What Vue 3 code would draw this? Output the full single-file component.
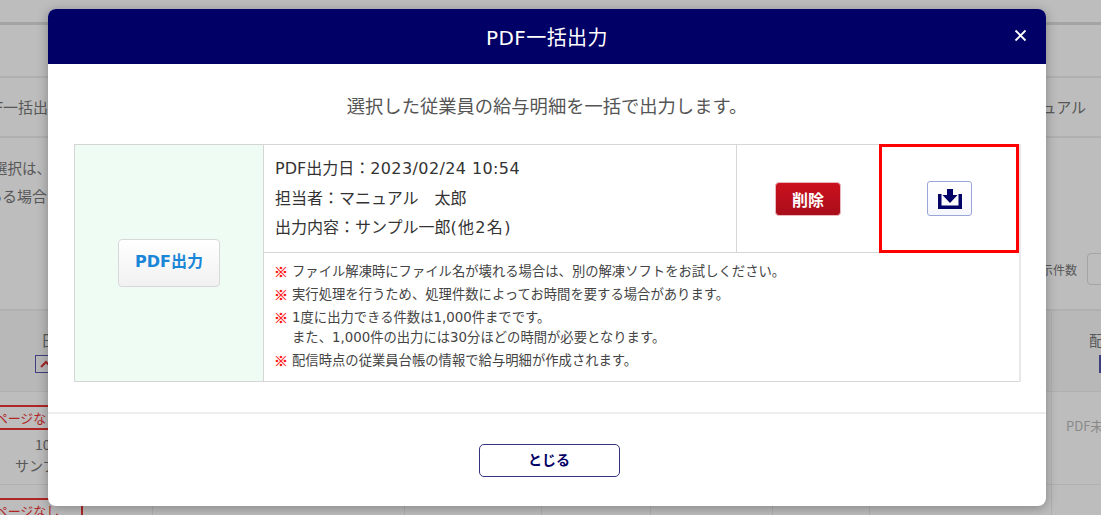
<script setup>
const notes = [
  ['ファイル解凍時にファイル名が壊れる場合は、別の解凍ソフトをお試しください。'],
  ['実行処理を行うため、処理件数によってお時間を要する場合があります。'],
  ['1度に出力できる件数は1,000件までです。', 'また、1,000件の出力には30分ほどの時間が必要となります。'],
  ['配信時点の従業員台帳の情報で給与明細が作成されます。']
]
const lastCells = [71, 252, 137, 109, 122, 97, 182]
</script>

<template>
  <div class="page">
    <div class="bg">
      <div class="bg-top"></div>
      <div class="bg-nav"></div>
      <div class="bg-tools"><span class="cut-a">PDF一括出力</span><span class="right-a">マニュアル</span></div>
      <div class="bg-info">
        <div class="info-text">
          <p class="l1">選択は、</p>
          <p class="l2">ある場合</p>
        </div>
        <div class="count"><span>表示件数</span><i class="select"></i></div>
      </div>
      <div class="bg-head">
        <div class="head-l"><span>日付</span><i class="sort"><svg width="12" height="8" viewBox="0 0 12 8"><path d="M1 7l5-5 5 5" fill="none" stroke="#d33" stroke-width="2"/></svg></i></div>
        <div class="head-r"><span>配信</span><i class="sort2"></i></div>
      </div>
      <div class="bg-row">
        <div class="row-l"><b class="tag">ページなし</b><span class="n">10</span><span class="s">サンプル一郎</span></div>
        <div class="row-r">PDF未出力</div>
      </div>
      <div class="bg-row last">
        <div class="row-l"><b class="tag">ページなし</b></div>
        <i v-for="(w, i) in lastCells" :key="i" class="cell" :style="{ width: w + 'px' }"></i>
      </div>
    </div>

    <div class="overlay"></div>

    <section class="modal">
      <header class="m-head">
        <h1>PDF一括出力</h1>
        <button class="x" aria-label="閉じる">
          <svg width="13" height="13" viewBox="0 0 13 13"><path d="M1.500 1.500l10 10M11.500 1.500l-10 10" stroke="#fff" stroke-width="1.800" fill="none"/></svg>
        </button>
      </header>
      <div class="m-body">
        <p class="lead">選択した従業員の給与明細を一括で出力します。</p>
        <table>
          <tbody>
            <tr class="r1">
              <td rowspan="2" class="c-pdf"><button class="btn-pdf">PDF出力</button></td>
              <td class="c-info">
                <p>PDF出力日：<span class="wide">2023/02/24 10:54</span></p>
                <p>担当者：マニュアル　太郎</p>
                <p>出力内容：サンプル一郎<span class="wider">(他2名)</span></p>
              </td>
              <td class="c-del"><button class="btn-del">削除</button></td>
              <td class="c-dl">
                <button class="btn-dl" aria-label="ダウンロード">
                  <svg width="24" height="20" viewBox="0 0 24 20">
                    <path d="M9 0h6v6h4.500L12 14 4.500 6H9z" fill="#000066"/>
                    <path d="M0 5h3.500v11.500h17V5H24v15H0z" fill="#000066"/>
                  </svg>
                </button>
              </td>
            </tr>
            <tr>
              <td colspan="3" class="c-notes">
                <div v-for="(n, i) in notes" :key="i" class="note">
                  <span class="mark">※</span>
                  <div><p v-for="t in n" :key="t">{{ t }}</p></div>
                </div>
              </td>
            </tr>
          </tbody>
        </table>
      </div>
      <footer class="m-foot"><button class="btn-close">とじる</button></footer>
    </section>
  </div>
</template>

<style>
html, body { margin: 0; padding: 0; background: #fff; overflow: hidden; }
</style>

<style scoped>
.page {
  --latin: "DejaVu Sans", "Noto Sans CJK JP", sans-serif;
  position: relative;
  width: 1101px;
  height: 515px;
  overflow: hidden;
  font-family: "Noto Sans CJK JP", "Noto Sans", sans-serif;
  color: #333;
}
p { margin: 0; }
h1 { margin: 0; }
button { font-family: inherit; padding: 0; cursor: pointer; }

/* background page */
.bg { height: 515px; overflow: hidden; background: #fff; font-size: 15px; color: #777; }
.bg-top { height: 22px; border-bottom: 3px solid #ddd; }
.bg-nav { height: 51px; }
.bg-tools {
  height: 62px;
  box-sizing: border-box;
  border-top: 2px solid #eee;
  border-bottom: 2px solid #eee;
  padding-bottom: 1px;
  display: flex;
  justify-content: space-between;
  align-items: center;
  white-space: nowrap;
}
.cut-a { margin-left: -25px; }
.right-a { margin-right: 15px; }
.bg-info {
  height: 173px;
  box-sizing: border-box;
  border-bottom: 2px solid #eee;
  display: flex;
  justify-content: space-between;
  white-space: nowrap;
}
.info-text { padding-top: 16px; line-height: 28px; }
.l1 { margin-left: -7px; font-size: 14.500px; }
.l2 { margin-left: -13px; }
.count { display: flex; align-items: center; gap: 10px; height: 32px; margin-top: 115px; margin-right: -46px; font-size: 12px; }
.select { display: block; width: 60px; height: 32px; box-sizing: border-box; border: 1px solid #ddd; border-radius: 4px; }
.bg-head {
  height: 81px;
  box-sizing: border-box;
  border-bottom: 1px solid #eee;
  background: #f9f9f9;
  display: flex;
  justify-content: space-between;
}
.head-l { margin-left: 35px; padding-top: 17px; display: flex; flex-direction: column; gap: 3px; white-space: nowrap; }
.head-l span { margin-left: 6px; line-height: 24px; }
.sort { display: flex; width: 30px; height: 18px; border: 1px solid #55a; align-items: center; padding-left: 4px; box-sizing: border-box; }
.head-r { width: 50px; border-left: 1px solid #eee; padding-top: 17px; box-sizing: border-box; display: flex; flex-direction: column; gap: 3px; white-space: nowrap; }
.head-r span { line-height: 24px; margin-left: 37px; }
.sort2 { display: block; width: 2px; height: 18px; background: #55a; margin-left: 47px; }
.bg-row {
  height: 93px;
  box-sizing: border-box;
  border-bottom: 1px solid #eee;
  display: flex;
  justify-content: space-between;
  white-space: nowrap;
  font-size: 14px;
}
.bg-row.last { height: 30px; border: 0; justify-content: flex-start; }
.row-l { display: flex; flex-direction: column; align-items: flex-start; width: 82px; padding-top: 13px; }
.n { margin: 4px 0 0 35px; line-height: 21px; }
.s { margin-left: 15px; line-height: 21px; }
.tag {
  flex: none;
  box-sizing: border-box;
  font-weight: 400;
  color: #e33;
  border: 2px solid #e33;
  width: 124px;
  height: 25px;
  padding-left: 12px;
  line-height: 21px;
  font-size: 13px;
  text-align: center;
  margin-left: -41px;
}
.cell { display: block; flex: none; height: 30px; box-sizing: border-box; border-right: 1px solid #eee; }
.row-r {
  flex: none;
  width: 50px;
  box-sizing: border-box;
  border-left: 1px solid #eee;
  padding: 24px 0 0 14px;
  color: #bbb;
  font-size: 13px;
  overflow: hidden;
}

.overlay { position: absolute; inset: 0; background: rgba(0, 0, 0, .26); }

/* modal */
.modal {
  position: absolute;
  left: 48px;
  top: 9px;
  width: 998px;
  height: 497px;
  display: flex;
  flex-direction: column;
  background: #fff;
  border-radius: 8px;
  overflow: hidden;
  box-shadow: 0 2px 12px rgba(0, 0, 0, .3);
}
.m-head {
  flex: none;
  height: 55px;
  background: #000066;
  display: flex;
  align-items: center;
  justify-content: center;
  position: relative;
}
.m-head h1 { color: #fff; font-size: 20px; font-weight: 400; letter-spacing: .4px; font-family: var(--latin); }
.x {
  position: absolute;
  right: 19px;
  top: 20px;
  width: 13px;
  height: 13px;
  border: 0;
  background: none;
  display: flex;
}
.m-body { flex: 1; padding: 0 26px; border-bottom: 2px solid #eee; }
.lead { text-align: center; font-size: 18.300px; line-height: 26px; margin-top: 28px; margin-bottom: 26px; color: #555; }
table { width: 947px; border-collapse: collapse; table-layout: fixed; }
td { border: 1px solid #d6d6d6; padding: 0; }
.r1 { height: 108px; }
.c-pdf { width: 188px; background: #effcf3; text-align: center; vertical-align: middle; }
.btn-pdf {
  width: 102px;
  height: 48px;
  padding-bottom: 6px;
  border: 1px solid #d8d8d8;
  border-radius: 4px;
  background: linear-gradient(#fff, #f1f1f1);
  color: #1a86d8;
  font-weight: 700;
  font-size: 16px;
  font-family: var(--latin);
}
.c-info { width: 461px; padding: 9px 0 0 11px; vertical-align: top; font-size: 16px; line-height: 29.500px; color: #333; font-family: var(--latin); }
.wide { letter-spacing: .4px; }
.wider { letter-spacing: 1.300px; }
.c-del { width: 142px; text-align: center; }
.btn-del {
  width: 66px;
  height: 34px;
  border: 1px solid #e9b9be;
  border-radius: 4px;
  background: linear-gradient(#cc101e, #a80e1b);
  color: #fff;
  font-weight: 700;
  font-size: 16px;
  vertical-align: middle;
}
.c-dl { position: relative; border-right: 2px solid #e8e8e8; text-align: center; }
.c-dl::after {
  content: "";
  position: absolute;
  top: -1px;
  bottom: -1px;
  left: -1px;
  right: 0;
  border: 3px solid #f00;
  pointer-events: none;
}
.btn-dl {
  width: 45px;
  height: 35px;
  border: 1px solid #9aa6d8;
  border-radius: 3px;
  background: linear-gradient(#fff, #f6f7fd);
  display: inline-flex;
  align-items: center;
  justify-content: center;
  vertical-align: middle;
}
.c-notes { padding: 9px 11px 7px 10px; font-size: 13.330px; color: #444; line-height: 20px; height: 129px; box-sizing: border-box; vertical-align: top; border-right: 2px solid #e8e8e8; font-family: var(--latin); }
.note { display: flex; gap: 4px; margin-bottom: 3px; }
.note:last-child { margin-bottom: 0; }
.mark { color: #f00; font-weight: 900; -webkit-text-stroke: .3px #f00; width: 14px; flex: none; font-size: 14px; margin-top: -1px; font-family: "Noto Sans CJK JP", sans-serif; }
.m-foot { flex: none; height: 92px; display: flex; justify-content: center; padding-top: 30px; box-sizing: border-box; }
.btn-close {
  width: 141px;
  height: 33px;
  margin-left: 4px;
  padding-bottom: 3px;
  border: 1px solid #33337f;
  border-radius: 5px;
  background: #fff;
  color: #000066;
  font-weight: 700;
  font-size: 14px;
}
</style>
